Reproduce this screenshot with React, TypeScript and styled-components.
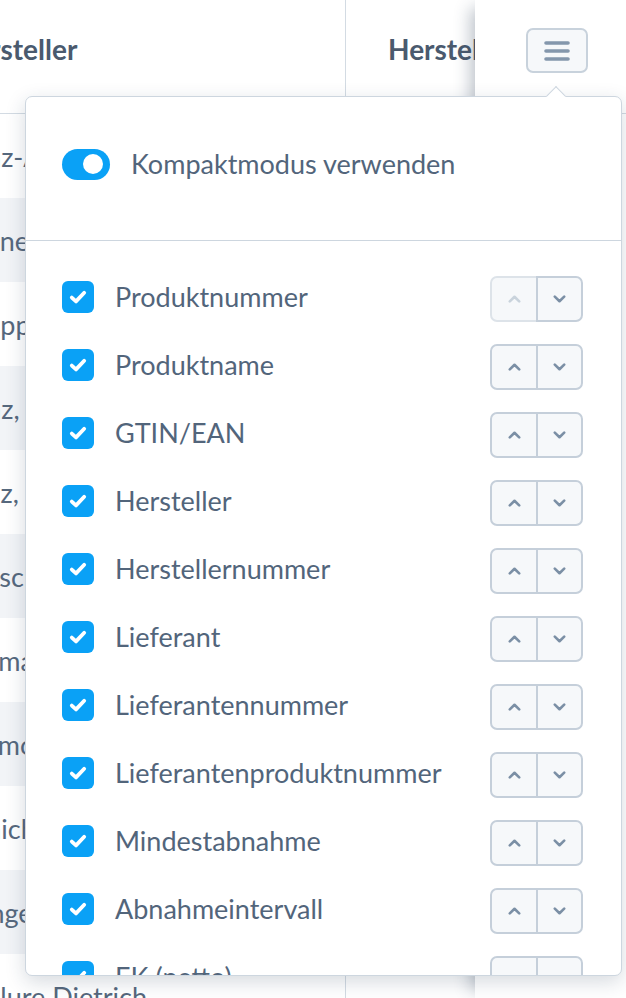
import React from 'react';
import styled, { createGlobalStyle } from 'styled-components';

const GlobalStyle = createGlobalStyle`
  html, body { margin: 0; padding: 0; background: #ffffff; }
  body { font-family: Lato, "Open Sans", sans-serif; overflow: hidden; }
  * { box-sizing: border-box; }
`;

const Page = styled.div`
  position: relative;
  width: 626px;
  height: 998px;
  overflow: hidden;
  display: flex;
  background: #ffffff;
`;

const ScrollArea = styled.div`
  flex: 1;
  overflow: hidden;
`;

const Table = styled.div`
  margin-left: -88px;
  width: 700px;
  display: flex;
  flex-direction: column;
`;

const HeaderRow = styled.div`
  display: grid;
  grid-template-columns: 434px 266px;
  height: 114px;
  border-bottom: 1px solid #d3dbe3;
`;

const HeaderCell = styled.div`
  padding: 32px 0 0 42px;
  font-weight: 700;
  font-size: 28px;
  line-height: 34px;
  color: #4a5a6e;
  white-space: nowrap;
  overflow: hidden;
  border-right: 1px solid #d3dbe3;
`;

const BodyRow = styled.div<{ $shaded: boolean }>`
  display: grid;
  grid-template-columns: 434px 266px;
  height: 84px;
  background: ${(p) => (p.$shaded ? '#f2f4f7' : '#ffffff')};
`;

const BodyCell = styled.div`
  display: flex;
  align-items: center;
  padding-left: 42px;
  font-size: 27px;
  color: #56687d;
  white-space: nowrap;
  overflow: hidden;
  border-right: 1px solid #d3dbe3;
`;

const StickyCol = styled.div`
  position: relative;
  z-index: 1;
  width: 151px;
  flex-shrink: 0;
  background: #ffffff;
  box-shadow: -12px 0 16px -8px rgba(40, 60, 85, 0.32);
`;

const StickyHeader = styled.div`
  height: 114px;
  padding: 28px 0 0 51px;
  border-bottom: 1px solid #d3dbe3;
`;

const MenuButton = styled.button`
  width: 62px;
  height: 45px;
  border: 2px solid #c8d2dc;
  border-radius: 7px;
  background: #f6f8fa;
  display: flex;
  align-items: center;
  justify-content: center;
  padding: 0;
`;

const Popover = styled.div`
  position: absolute;
  z-index: 5;
  left: 25px;
  top: 96px;
  width: 597px;
  height: 880px;
  background: #ffffff;
  border: 1px solid #cdd6df;
  border-radius: 7px;
  box-shadow: 0 6px 20px rgba(30, 50, 75, 0.18);
`;

const Arrow = styled.div`
  position: absolute;
  top: -8px;
  left: 523px;
  width: 14px;
  height: 14px;
  background: #ffffff;
  border-top: 1px solid #cdd6df;
  border-left: 1px solid #cdd6df;
  transform: rotate(45deg);
`;

const PopoverBody = styled.div`
  height: 100%;
  overflow: hidden;
  border-radius: 7px;
`;

const ToggleSection = styled.div`
  display: flex;
  align-items: center;
  gap: 21px;
  padding: 51px 37px 60px 36px;
  border-bottom: 1px solid #cdd6df;
`;

const Toggle = styled.div`
  position: relative;
  width: 48px;
  height: 31px;
  border-radius: 16px;
  background: #0aa1f6;
  flex-shrink: 0;
`;

const Knob = styled.div`
  position: absolute;
  top: 5.5px;
  right: 7px;
  width: 20px;
  height: 20px;
  border-radius: 50%;
  background: #ffffff;
`;

const Label = styled.span`
  font-size: 27px;
  line-height: 32px;
  color: #52657b;
  white-space: nowrap;
`;

const List = styled.div`
  padding: 22px 38px 0 36px;
`;

const Item = styled.div`
  display: flex;
  align-items: center;
  height: 68px;
`;

const Checkbox = styled.div`
  width: 32px;
  height: 32px;
  border-radius: 6px;
  background: #0aa1f6;
  display: flex;
  align-items: center;
  justify-content: center;
  margin-right: 21px;
  flex-shrink: 0;
`;

const ItemLabel = styled(Label)`
  flex: 1;
`;

const Group = styled.div`
  display: flex;
  height: 46px;
  margin-top: 4px;
`;

const MoveButton = styled.button<{ $side: 'up' | 'down'; $disabled?: boolean }>`
  position: relative;
  z-index: ${(p) => (p.$disabled ? 0 : 1)};
  width: ${(p) => (p.$side === 'up' ? '48px' : '47px')};
  height: 46px;
  padding: 0;
  margin-left: ${(p) => (p.$side === 'down' ? '-2px' : '0')};
  border: 2px solid ${(p) => (p.$disabled ? '#dde3e9' : '#c5cfda')};
  border-radius: ${(p) => (p.$side === 'up' ? '7px 0 0 7px' : '0 7px 7px 0')};
  background: #f6f8fa;
  color: ${(p) => (p.$disabled ? '#c9d3dc' : '#7b8fa5')};
  display: flex;
  align-items: center;
  justify-content: center;
`;

const Chevron = ({ dir }: { dir: 'up' | 'down' }) => (
  <svg width="13" height="8" viewBox="0 0 13 8">
    <path
      d={dir === 'up' ? 'M1.8 6.4 L6.5 1.8 L11.2 6.4' : 'M1.8 1.6 L6.5 6.2 L11.2 1.6'}
      fill="none"
      stroke="currentColor"
      strokeWidth="2.6"
      strokeLinecap="round"
      strokeLinejoin="round"
    />
  </svg>
);

const Check = () => (
  <svg width="32" height="32" viewBox="0 0 32 32">
    <path
      d="M9.8 16.6 L14 20.4 L22.2 11.8"
      fill="none"
      stroke="#ffffff"
      strokeWidth="3.8"
      strokeLinecap="round"
      strokeLinejoin="round"
    />
  </svg>
);

const Hamburger = () => (
  <svg width="26" height="22" viewBox="0 0 26 22">
    <g stroke="#8497ac" strokeWidth="3.6" strokeLinecap="round">
      <line x1="2" y1="3" x2="24" y2="3" />
      <line x1="2" y1="11" x2="24" y2="11" />
      <line x1="2" y1="19" x2="24" y2="19" />
    </g>
  </svg>
);

const rows = [
  'Kunz-Adler KG',
  'Bahner KG',
  'Knapp GmbH',
  'Kunz, Weber und Lang',
  'Benz, Kühn und Krause',
  'Rausch AG',
  'Hermann',
  'Raymond & Co',
  'Kunich & Söhne',
  'Hunger OHG',
  'Mollure Dietrich',
];

const columns = [
  'Produktnummer',
  'Produktname',
  'GTIN/EAN',
  'Hersteller',
  'Herstellernummer',
  'Lieferant',
  'Lieferantennummer',
  'Lieferantenproduktnummer',
  'Mindestabnahme',
  'Abnahmeintervall',
  'EK (netto)',
];

export default function App() {
  return (
    <>
      <GlobalStyle />
      <Page>
        <ScrollArea>
          <Table>
            <HeaderRow>
              <HeaderCell>Hersteller</HeaderCell>
              <HeaderCell>Herstellernummer</HeaderCell>
            </HeaderRow>
            {rows.map((r, i) => (
              <BodyRow key={r} $shaded={i % 2 === 1}>
                <BodyCell>{r}</BodyCell>
                <BodyCell />
              </BodyRow>
            ))}
          </Table>
        </ScrollArea>
        <StickyCol>
          <StickyHeader>
            <MenuButton aria-label="Spalten">
              <Hamburger />
            </MenuButton>
          </StickyHeader>
        </StickyCol>
        <Popover>
          <Arrow />
          <PopoverBody>
            <ToggleSection>
              <Toggle>
                <Knob />
              </Toggle>
              <Label>Kompaktmodus verwenden</Label>
            </ToggleSection>
            <List>
              {columns.map((c, i) => (
                <Item key={c}>
                  <Checkbox>
                    <Check />
                  </Checkbox>
                  <ItemLabel>{c}</ItemLabel>
                  <Group>
                    <MoveButton $side="up" $disabled={i === 0}>
                      <Chevron dir="up" />
                    </MoveButton>
                    <MoveButton $side="down">
                      <Chevron dir="down" />
                    </MoveButton>
                  </Group>
                </Item>
              ))}
            </List>
          </PopoverBody>
        </Popover>
      </Page>
    </>
  );
}
